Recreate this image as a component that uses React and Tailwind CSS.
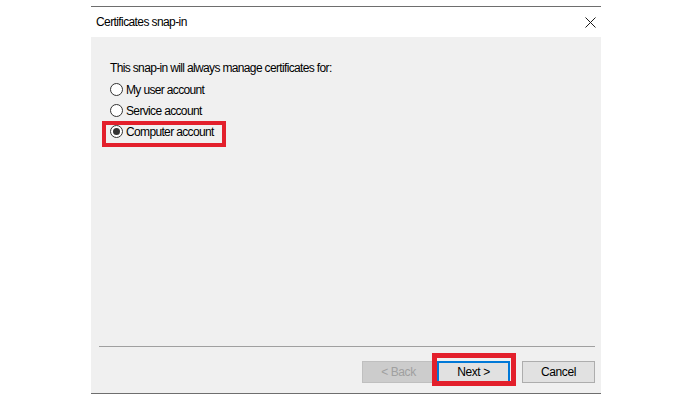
import React, { useState } from 'react';

const options = [
  { id: 'user', label: 'My user account' },
  { id: 'service', label: 'Service account' },
  { id: 'computer', label: 'Computer account' },
];

const Radio = ({ checked, label, onSelect }) => (
  <label className="flex items-center h-[21px] cursor-default" onClick={onSelect}>
    <span className="w-[13px] h-[13px] rounded-full border border-[#333333] bg-white flex items-center justify-center shrink-0">
      {checked && <span className="w-[7px] h-[7px] rounded-full bg-[#333333]" />}
    </span>
    <span className="ml-[3px] text-[12px] tracking-[-0.65px] text-[#000000]">{label}</span>
  </label>
);

const CloseIcon = () => (
  <svg width="11" height="11" viewBox="0 0 11 11">
    <path d="M0.5 0.5 L10.5 10.5 M10.5 0.5 L0.5 10.5" stroke="#1a1a1a" strokeWidth="1" />
  </svg>
);

export default function App() {
  const [account, setAccount] = useState('computer');

  return (
    <div
      className="relative w-[700px] h-[400px] bg-white pt-[6px] pl-[91px]"
      style={{ fontFamily: '"Liberation Sans", Arial, sans-serif' }}
    >
      <div className="w-[510px] h-[388px] flex flex-col border-t border-b border-[#6e6e6e]">
        {/* title bar */}
        <div className="h-[30px] bg-white flex items-center justify-between pl-[5px] pr-[5px]">
          <span className="text-[12px] tracking-[-0.6px] text-[#000000]">Certificates snap-in</span>
          <CloseIcon />
        </div>

        {/* wizard page */}
        <div className="flex-1 bg-[#f0f0f0] flex flex-col">
          <div className="flex-1 pl-[19px] pt-[23px]">
            <p className="text-[12px] tracking-[-0.65px] leading-[16px] text-[#000000] mb-[3px]">
              This snap-in will always manage certificates for:
            </p>
            {options.map((o) => (
              <Radio
                key={o.id}
                label={o.label}
                checked={account === o.id}
                onSelect={() => setAccount(o.id)}
              />
            ))}
          </div>

          <div className="ml-[8px] mr-[6px] h-px bg-[#a0a0a0]" />

          <div className="flex justify-end pr-[6px] pt-[14px] pb-[10px]">
            <button
              disabled
              className="w-[73px] h-[22px] bg-[#cccccc] border border-[#bfbfbf] text-[12px] tracking-[-0.4px] text-[#a0a0a0]"
            >
              &lt; Back
            </button>
            <button className="ml-[2px] w-[73px] h-[22px] bg-[#e1e1e1] border-2 border-[#0078d7] text-[12px] tracking-[-0.4px] text-[#000000]">
              Next &gt;
            </button>
            <button className="ml-[12px] w-[73px] h-[22px] bg-[#e1e1e1] border border-[#adadad] text-[12px] tracking-[-0.4px] text-[#000000]">
              Cancel
            </button>
          </div>
        </div>
      </div>

      {/* red callouts */}
      <div className="absolute left-[102px] top-[121px] w-[124px] h-[26px] border-[4px] border-[#e3202c]" />
      <div className="absolute left-[432px] top-[353px] w-[84px] h-[33px] border-[5px] border-[#e3202c]" />
    </div>
  );
}
